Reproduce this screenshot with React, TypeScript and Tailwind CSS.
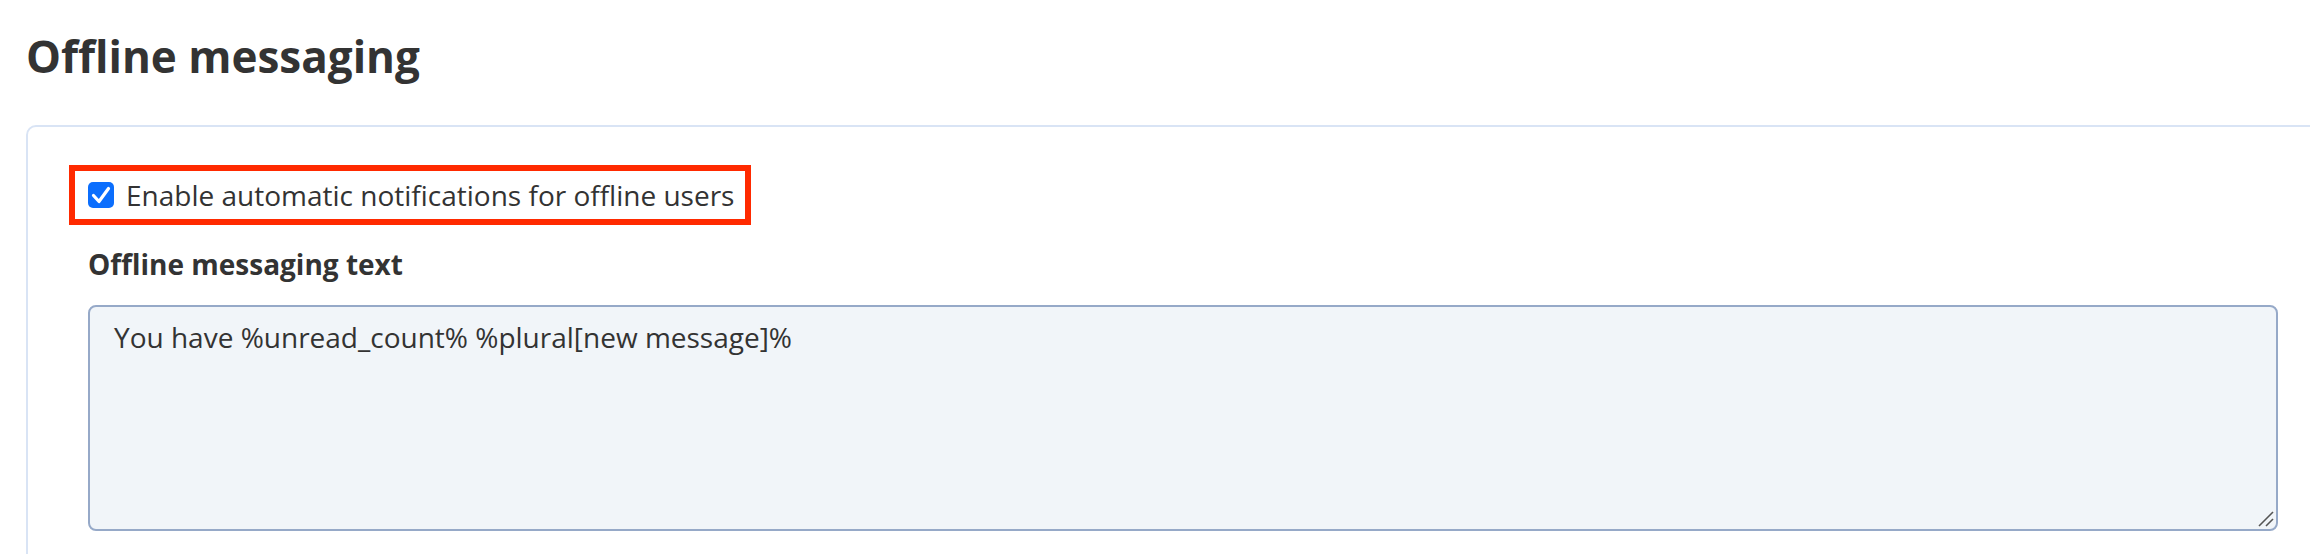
import React from 'react';

const CheckBox = () => (
    <div className="w-[26px] h-[26px] rounded-[5px] bg-[#0b6efd] flex items-center justify-center shrink-0">
        <svg width="26" height="26" viewBox="0 0 26 26" fill="none">
            <path d="M5.5 13.5 L11 19.5 L20.5 6.5" stroke="#fff" strokeWidth="3.2" strokeLinecap="round" strokeLinejoin="round" />
        </svg>
    </div>
);

const App = () => {
    return (
        <div className="w-[2310px] h-[554px] overflow-hidden bg-white pl-[26px] pt-[26px] font-['Open_Sans',sans-serif] text-[#333333]">
            <h1 className="text-[44px] leading-[60px] font-bold">Offline messaging</h1>

            <div className="mt-[39px] w-[2340px] h-[500px] border-2 border-[#d9e4f5] rounded-[10px] pl-[41px] pt-[38px]">
                {/* highlighted option */}
                <div className="inline-flex items-center gap-[12px] border-[6px] border-[#ff2a00] pl-[13px] pr-[11px] py-[4px]">
                    <CheckBox />
                    <span className="text-[28px] leading-[40px]">Enable automatic notifications for offline users</span>
                </div>

                <div className="pl-[19px]">
                    <div className="mt-[19px] text-[28px] leading-[40px] font-bold">Offline messaging text</div>
                    <div className="relative mt-[21px] w-[2190px] h-[226px] border-2 border-[#96a9c8] rounded-[8px] bg-[#f1f5f9] px-[24px] pt-[9px] text-[28px] leading-[42px]">
                        You have %unread_count% %plural[new message]%
                        <svg className="absolute right-[2px] bottom-[2px]" width="16" height="16" viewBox="0 0 16 16">
                            <path d="M1 15 L15 1" stroke="#555" strokeWidth="1.6" />
                            <path d="M8 15 L15 8" stroke="#555" strokeWidth="1.6" />
                        </svg>
                    </div>
                </div>
            </div>
        </div>
    );
};

export default App;
